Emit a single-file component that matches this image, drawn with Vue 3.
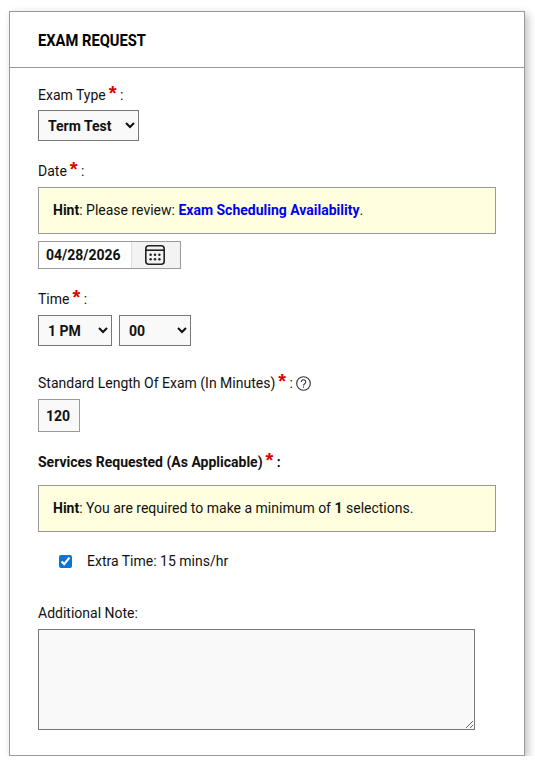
<template>
  <div class="card">
    <h2 class="card-title"><span class="title-text">EXAM REQUEST</span></h2>
    <form class="card-body" @submit.prevent>
      <div class="field type-field">
        <label class="label">Exam Type<span class="req">*</span> :</label>
        <select v-model="examType" class="select type-select">
          <option>Term Test</option>
          <option>Final Exam</option>
        </select>
      </div>

      <div class="field date-field">
        <label class="label">Date<span class="req">*</span> :</label>
        <div class="hint">
          <b>Hint</b>: Please review: <a href="#" class="link">Exam Scheduling Availability</a>.
        </div>
        <div class="date-group">
          <input v-model="examDate" type="text" class="date-input" />
          <button type="button" class="date-btn" aria-label="Choose date">
            <svg viewBox="0 0 20 20" width="20" height="20" fill="none" stroke="#222" stroke-width="1.6">
              <rect x="0.8" y="0.8" width="18.4" height="18.4" rx="3"></rect>
              <path d="M1 5.2h18"></path>
              <g fill="#222" stroke="none">
                <circle cx="5.6" cy="9.8" r="1.25"></circle>
                <circle cx="10" cy="9.8" r="1.25"></circle>
                <circle cx="14.4" cy="9.8" r="1.25"></circle>
                <circle cx="5.6" cy="14.2" r="1.25"></circle>
                <circle cx="10" cy="14.2" r="1.25"></circle>
                <circle cx="14.4" cy="14.2" r="1.25"></circle>
              </g>
            </svg>
          </button>
        </div>
      </div>

      <div class="field time-field">
        <label class="label">Time<span class="req">*</span> :</label>
        <div class="time-row">
          <select v-model="hour" class="select hour-select">
            <option v-for="h in hours" :key="h">{{ h }}</option>
          </select>
          <select v-model="minute" class="select minute-select">
            <option v-for="m in minutes" :key="m">{{ m }}</option>
          </select>
        </div>
      </div>

      <div class="field length-field">
        <label class="label">
          Standard Length Of Exam (In Minutes)<span class="req">*</span> :
          <svg class="help" viewBox="0 0 15 15" width="15" height="15" fill="none" stroke="#333" stroke-width="1.1">
            <circle cx="7.5" cy="7.5" r="6.8"></circle>
            <path d="M5.3 5.9a2.2 2.2 0 1 1 3.4 1.9c-.8.5-1.2.9-1.2 1.8"></path>
            <path d="M7.5 10.5v1.2"></path>
          </svg>
        </label>
        <input v-model="examLength" type="text" class="length-input" />
      </div>

      <div class="field services-field">
        <label class="label strong">Services Requested (As Applicable)<span class="req">*</span> :</label>
        <div class="hint services-hint">
          <b>Hint</b>: You are required to make a minimum of <b>1</b> selections.
        </div>
        <label class="check-row">
          <input v-model="extraTime" type="checkbox" class="check" />
          <span>Extra Time: 15 mins/hr</span>
        </label>
      </div>

      <div class="field note-field">
        <label class="label">Additional Note:</label>
        <textarea v-model="note" class="note"></textarea>
      </div>
    </form>
  </div>
</template>

<script setup>
import { ref } from 'vue';

const examType = ref('Term Test');
const examDate = ref('04/28/2026');
const hour = ref('1 PM');
const minute = ref('00');
const examLength = ref('120');
const extraTime = ref(true);
const note = ref('');

const hours = ['12 PM', '1 PM', '2 PM', '3 PM', '4 PM'];
const minutes = ['00', '15', '30', '45'];
</script>

<style>
html,
body {
  background: #fff;
}
</style>

<style scoped>
.card {
  box-sizing: border-box;
  width: 516px;
  height: 745px;
  margin: 11px 0 0 9px;
  background: #fff;
  border: 1px solid #999;
  box-shadow: 3px 3px 8px rgba(0, 0, 0, 0.25);
  font-family: Roboto, "Liberation Sans", sans-serif;
  font-size: 14px;
  color: #111;
}

.card-title {
  box-sizing: border-box;
  height: 56px;
  margin: 0;
  padding: 1px 28px 0;
  border-bottom: 1px solid #999;
  font-size: 17px;
  font-weight: 700;
  line-height: 55px;
  color: #000;
}

/* the original heading is a condensed cut, Roboto here only has the normal width */
.title-text {
  display: inline-block;
  transform: scaleX(0.865);
  transform-origin: left center;
}

.card-body {
  padding: 17px 28px 0;
}

.field {
  display: block;
}

.label {
  display: block;
  height: 20px;
  line-height: 20px;
  white-space: nowrap;
}

.strong {
  font-weight: 700;
}

.req {
  margin-left: 3px;
  color: #d00;
  font-family: "Liberation Sans", sans-serif;
  font-size: 20px;
  font-weight: 700;
  line-height: 14px;
}

.select {
  box-sizing: border-box;
  display: block;
  height: 31px;
  padding: 0 0 0 5px;
  border: 1px solid #777;
  border-radius: 0;
  background-color: #f9f9f9;
  font-family: inherit;
  font-size: 14px;
  font-weight: 700;
  color: #111;
}

.type-field {
  margin-bottom: 20px;
}

.type-select {
  width: 101px;
  margin-top: 5px;
}

.date-field {
  margin-bottom: 20px;
}

.hint {
  box-sizing: border-box;
  height: 47px;
  margin-top: 6px;
  padding: 0 14px;
  border: 1px solid #999;
  background: #ffffdf;
  line-height: 45px;
}

.link {
  color: #00e;
  font-weight: 700;
  text-decoration: none;
}

.date-group {
  display: flex;
  box-sizing: border-box;
  width: 143px;
  height: 28px;
  margin-top: 7px;
  border: 1px solid #999;
}

.date-input {
  box-sizing: border-box;
  width: 93px;
  padding: 0 7px;
  border: 0;
  border-right: 1px solid #ddd;
  outline: none;
  font-family: inherit;
  font-size: 14px;
  font-weight: 700;
  color: #111;
}

.date-btn {
  flex: 1;
  display: flex;
  align-items: center;
  justify-content: center;
  padding: 0 2px 0 0;
  border: 0;
  background: #f3f3f3;
}

.time-row {
  display: flex;
  gap: 7px;
  margin-top: 6px;
}

.hour-select {
  width: 74px;
}

.minute-select {
  width: 72px;
}

.time-field {
  margin-bottom: 27px;
}

.help {
  vertical-align: -3px;
}

.length-input {
  box-sizing: border-box;
  display: block;
  width: 42px;
  height: 33px;
  margin-top: 6px;
  padding: 0 2px 0 0;
  border: 1px solid #999;
  background: #f9f9f9;
  outline: none;
  font-family: inherit;
  font-size: 14px;
  font-weight: 700;
  text-align: center;
  color: #111;
}

.length-field {
  margin-bottom: 20px;
}

.services-hint {
  margin-top: 13px;
}

.check-row {
  display: flex;
  align-items: center;
  height: 20px;
  margin: 19px 0 0 21px;
}

.check {
  width: 13px;
  height: 13px;
  margin: 0 15px 0 0;
  accent-color: #0b75d6;
}

.services-field {
  margin-bottom: 32px;
}

.note {
  box-sizing: border-box;
  display: block;
  width: 437px;
  height: 101px;
  margin-top: 6px;
  padding: 4px;
  border: 1px solid #777;
  background: #f9f9f9;
  outline: none;
  font-family: inherit;
  font-size: 14px;
}
</style>
